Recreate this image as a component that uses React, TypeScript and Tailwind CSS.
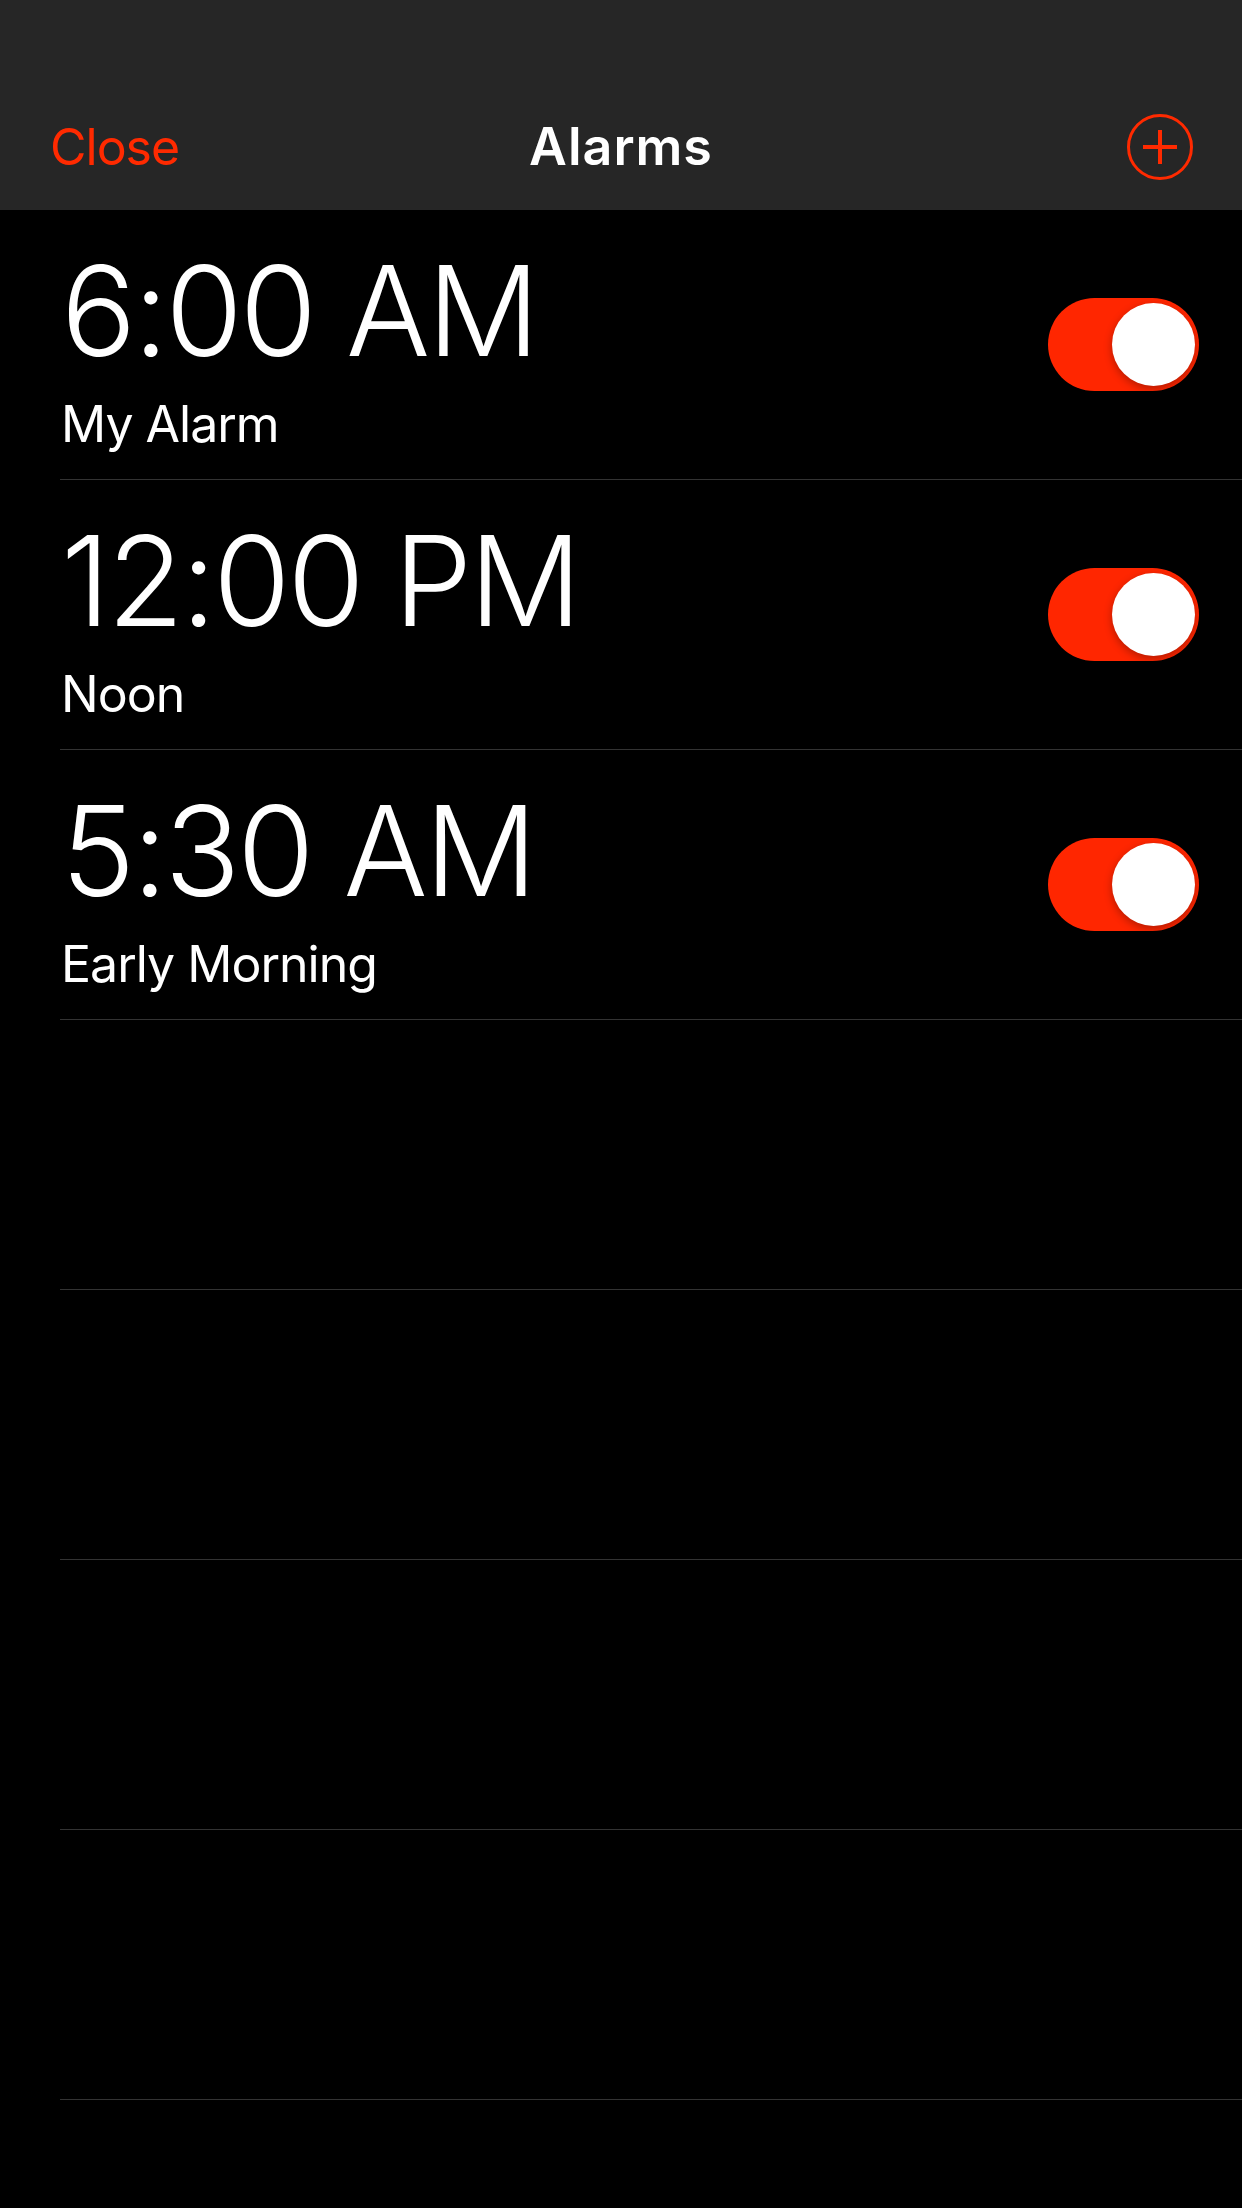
import React from "react";

type Alarm = {
  time: string;
  label: string;
  on: boolean;
};

const alarms: Alarm[] = [
  { time: "6:00 AM", label: "My Alarm", on: true },
  { time: "12:00 PM", label: "Noon", on: true },
  { time: "5:30 AM", label: "Early Morning", on: true },
];

const font = { fontFamily: "Inter, 'Noto Sans', sans-serif" };

function PlusCircle() {
  return (
    <svg width="66" height="66" viewBox="0 0 66 66" fill="none">
      <circle cx="33" cy="33" r="31.5" stroke="#ff2a00" strokeWidth="3" />
      <path d="M16 33h34M33 16v34" stroke="#ff2a00" strokeWidth="4" />
    </svg>
  );
}

function Toggle({ on }: { on: boolean }) {
  return (
    <div
      className={`relative h-[93px] w-[151px] rounded-full ${
        on ? "bg-[#ff2600]" : "bg-[#39393d]"
      }`}
    >
      <div
        className={`absolute top-[5px] h-[83px] w-[83px] rounded-full bg-white shadow-[0_3px_8px_rgba(0,0,0,0.3)] ${
          on ? "right-[4px]" : "left-[4px]"
        }`}
      />
    </div>
  );
}

function AlarmRow({ alarm }: { alarm?: Alarm }) {
  return (
    <div className="ml-[60px] box-border flex h-[270px] items-center justify-between border-b border-[#333333] pr-[43px]">
      {alarm ? (
        <>
          <div className="self-start pl-[1px] pt-[38px] text-white">
            <div className="text-[125px] leading-[125px] font-light tracking-[-3px]">
              {alarm.time}
            </div>
            <div className="pt-[26px] text-[50px] leading-[50px] font-normal tracking-[-1px]">
              {alarm.label}
            </div>
          </div>
          <Toggle on={alarm.on} />
        </>
      ) : null}
    </div>
  );
}

export default function App() {
  const rows: (Alarm | undefined)[] = [
    ...alarms,
    undefined,
    undefined,
    undefined,
    undefined,
  ];

  return (
    <div className="min-h-[2208px] w-[1242px] bg-black" style={font}>
      <header className="flex h-[210px] items-center justify-between bg-[#262626] px-[49px] pt-[84px]">
        <button className="w-[200px] pl-[1px] text-left text-[50px] tracking-[-1px] text-[#ff2a00]">
          Close
        </button>
        <h1 className="text-[52px] font-semibold tracking-[1px] text-white">
          Alarms
        </h1>
        <div className="flex w-[200px] justify-end">
          <PlusCircle />
        </div>
      </header>
      <div>
        {rows.map((alarm, i) => (
          <AlarmRow key={i} alarm={alarm} />
        ))}
      </div>
    </div>
  );
}
